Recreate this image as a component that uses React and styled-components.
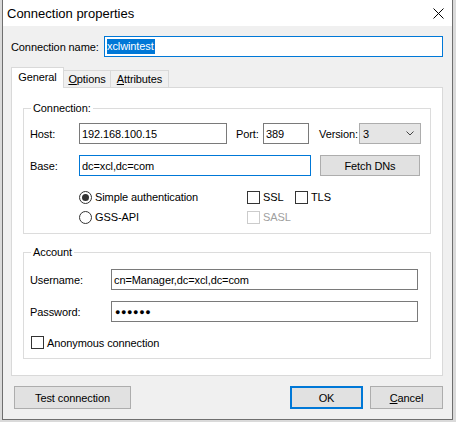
import React from 'react'
import styled, { createGlobalStyle } from 'styled-components'

const GlobalStyle = createGlobalStyle`
  html, body {
    margin: 0;
    padding: 0;
    background: #dadada;
  }
  body {
    font-family: "Liberation Sans", Arial, sans-serif;
    font-size: 11px;
    color: #000;
  }
  * { box-sizing: border-box; }
`

const Dialog = styled.div`
  width: 451px;
  height: 420px;
  margin-left: 2px;
  background: #f0f0f0;
  border: 1px solid #6f6f6f;
  border-top: none;
  display: flex;
  flex-direction: column;
`

const TitleBar = styled.div`
  height: 26px;
  background: #fff;
  display: flex;
  align-items: center;
  justify-content: space-between;
  padding: 0 8px 0 4px;
  font-size: 13px;
`

const Close = styled.svg`
  width: 11px;
  height: 11px;
  margin-top: 1px;
`

const NameRow = styled.div`
  display: flex;
  align-items: center;
  margin: 10px 9px 0 8px;
  height: 21px;
`

const Label = styled.span`
  width: ${p => p.$w || 49}px;
  flex-shrink: 0;
  white-space: nowrap;
  letter-spacing: -0.1px;
`

const Field = styled.div`
  width: ${p => (p.$w ? `${p.$w}px` : 'auto')};
  flex: ${p => (p.$w ? 'none' : 1)};
  height: 21px;
  background: #fff;
  border: 1px solid ${p => (p.$focus ? '#0078d7' : '#7a7a7a')};
  display: flex;
  align-items: center;
  padding-left: 2px;
  white-space: nowrap;
  overflow: hidden;
  letter-spacing: -0.1px;
`

const Selected = styled.span`
  background: #0078d7;
  color: #fff;
  line-height: 15px;
  padding: 0 1px 0 0;
`

const Tabs = styled.div`
  display: flex;
  align-items: flex-end;
  height: 20px;
  margin: 11px 0 -1px 8px;
  position: relative;
  z-index: 1;
`

const Tab = styled.div`
  height: ${p => (p.$active ? 21 : 18)}px;
  width: ${p => p.$w}px;
  display: flex;
  align-items: center;
  justify-content: center;
  background: ${p => (p.$active ? '#fff' : '#f0f0f0')};
  border: 1px solid #d9d9d9;
  border-bottom: ${p => (p.$active ? 'none' : '1px solid #d9d9d9')};
  border-left: ${p => (p.$first ? '1px solid #d9d9d9' : 'none')};
  padding-bottom: ${p => (p.$active ? 2 : 0)}px;
  letter-spacing: -0.1px;
`

const Panel = styled.div`
  height: 289px;
  margin: 0 9px 0 8px;
  background: #fff;
  border: 1px solid #d9d9d9;
  padding: 13px 11px 0 11px;
  display: flex;
  flex-direction: column;
`

const Group = styled.fieldset`
  margin: ${p => p.$gap || 0}px 0 0 0;
  padding: 0 0 0 6px;
  height: ${p => p.$h}px;
  border: 1px solid #dcdcdc;
  min-width: 0;
`

const Legend = styled.legend`
  margin-left: 1px;
  padding: 0 2px;
  line-height: 14px;
  letter-spacing: -0.1px;
`

const Row = styled.div`
  display: flex;
  align-items: center;
  height: ${p => p.$h || 21}px;
  margin-top: ${p => p.$mt || 0}px;
`

const Button = styled.div`
  width: ${p => p.$w}px;
  height: ${p => p.$h || 23}px;
  margin-left: ${p => p.$ml || 0}px;
  background: #e1e1e1;
  border: ${p => (p.$default ? '2px solid #0078d7' : '1px solid #adadad')};
  display: flex;
  align-items: center;
  justify-content: center;
  letter-spacing: -0.1px;
`

const Combo = styled.div`
  width: 62px;
  height: 21px;
  background: #e5e5e5;
  border: 1px solid #adadad;
  display: flex;
  align-items: center;
  justify-content: space-between;
  padding: 0 6px 0 3px;
`

const Choice = styled.div`
  display: flex;
  align-items: center;
  width: ${p => (p.$w ? `${p.$w}px` : 'auto')};
  color: ${p => (p.$disabled ? '#a0a0a0' : '#000')};
  letter-spacing: -0.1px;
  white-space: nowrap;
`

const Radio = styled.span`
  width: 13px;
  height: 13px;
  border-radius: 50%;
  border: 1px solid #333;
  background: #fff;
  margin-right: 3px;
  display: flex;
  align-items: center;
  justify-content: center;
  &::after {
    content: '';
    width: 7px;
    height: 7px;
    border-radius: 50%;
    background: ${p => (p.$on ? '#333' : 'transparent')};
  }
`

const Check = styled.span`
  width: 13px;
  height: 13px;
  border: 1px solid ${p => (p.$disabled ? '#cccccc' : '#333')};
  background: #fff;
  margin-right: 3px;
  flex-shrink: 0;
`

const Dots = styled.span`
  font-size: 9px;
  letter-spacing: 0.6px;
  padding-left: 1px;
`

const Footer = styled.div`
  display: flex;
  align-items: center;
  margin: 10px 9px 0 11px;
`

const Spacer = styled.div`
  flex: 1;
`

export default function App() {
  return (
    <>
      <GlobalStyle />
      <Dialog>
        <TitleBar>
          <span>Connection properties</span>
          <Close viewBox="0 0 11 11">
            <path d="M0.5 0.5 L10.5 10.5 M10.5 0.5 L0.5 10.5" stroke="#000" strokeWidth="1" />
          </Close>
        </TitleBar>

        <NameRow>
          <Label $w={93}>Connection name:</Label>
          <Field $focus>
            <Selected>xclwintest</Selected>
          </Field>
        </NameRow>

        <Tabs>
          <Tab $active $first $w={53}>General</Tab>
          <Tab $w={47}><span><u>O</u>ptions</span></Tab>
          <Tab $w={58}><span><u>A</u>ttributes</span></Tab>
        </Tabs>

        <Panel>
          <Group $h={133}>
            <Legend>Connection:</Legend>
            <Row $mt={8}>
              <Label>Host:</Label>
              <Field $w={148}>192.168.100.15</Field>
              <Label $w={27} style={{ marginLeft: 9 }}>Port:</Label>
              <Field $w={46}>389</Field>
              <Label $w={40} style={{ marginLeft: 10 }}>Version:</Label>
              <Combo>
                <span>3</span>
                <svg width="8" height="5" viewBox="0 0 8 5">
                  <polyline points="0.5,0.5 4,4 7.5,0.5" fill="none" stroke="#444" strokeWidth="1" />
                </svg>
              </Combo>
            </Row>
            <Row $mt={11}>
              <Label>Base:</Label>
              <Field $w={232} $focus>dc=xcl,dc=com</Field>
              <Button $w={100} $h={21} $ml={9}>Fetch DNs</Button>
            </Row>
            <Row $mt={11} $h={20}>
              <Label />
              <Choice $w={168}><Radio $on />Simple authentication</Choice>
              <Choice $w={48}><Check />SSL</Choice>
              <Choice><Check />TLS</Choice>
            </Row>
            <Row $h={20}>
              <Label />
              <Choice $w={168}><Radio />GSS-API</Choice>
              <Choice $disabled><Check $disabled />SASL</Choice>
            </Row>
          </Group>

          <Group $h={114} $gap={11}>
            <Legend>Account</Legend>
            <Row $mt={10}>
              <Label $w={81}>Username:</Label>
              <Field $w={307}>cn=Manager,dc=xcl,dc=com</Field>
            </Row>
            <Row $mt={11}>
              <Label $w={81}>Password:</Label>
              <Field $w={307}><Dots>●●●●●●</Dots></Field>
            </Row>
            <Row $mt={11} $h={19}>
              <Choice style={{ marginLeft: 1 }}><Check />Anonymous connection</Choice>
            </Row>
          </Group>
        </Panel>

        <Footer>
          <Button $w={117}>Test connection</Button>
          <Spacer />
          <Button $w={73} $default>OK</Button>
          <Button $w={73} $ml={7}><span><u>C</u>ancel</span></Button>
        </Footer>
      </Dialog>
    </>
  )
}
